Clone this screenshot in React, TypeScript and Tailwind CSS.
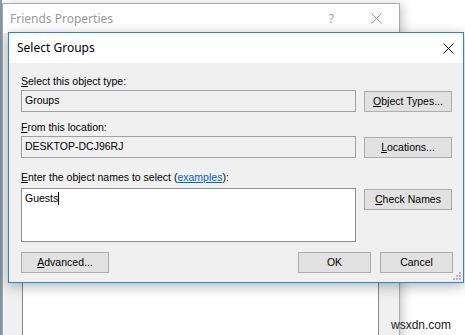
const ui = { fontFamily: '"Liberation Sans", Arial, sans-serif' };
const title = { fontFamily: '"Noto Sans", "Open Sans", sans-serif' };

const CloseIcon = ({ color }: { color: string }) => (
  <svg width="11" height="11" viewBox="0 0 11 11">
    <path d="M0.5 0.5L10.5 10.5M10.5 0.5L0.5 10.5" stroke={color} strokeWidth="1" fill="none" />
  </svg>
);

const Btn = ({ w, children }: { w: string; children: React.ReactNode }) => (
  <div
    className={`${w} h-[21px] flex items-center justify-center bg-[#e1e1e1] border border-[#adadad] text-[10.5px] text-black`}
  >
    {children}
  </div>
);

const U = ({ children }: { children: React.ReactNode }) => <span className="underline underline-offset-[1px]">{children}</span>;

export default function App() {
  return (
    <div className="relative w-[465px] h-[335px] overflow-hidden bg-white" style={ui}>
      {/* edge of a window further back */}
      <div className="absolute left-0 top-0 w-[2px] h-full bg-[#8c9cb0]" />

      {/* Friends Properties (inactive, behind) */}
      <div className="absolute left-[2px] top-[3px] w-[398px] h-[345px] flex flex-col border border-[#aaaaaa] bg-[#f0f0f0] shadow-[2px_2px_10px_rgba(0,0,0,0.25)]">
        <div className="h-[29px] shrink-0 flex items-center bg-white pl-[7px] pr-[17px]" style={title}>
          <span className="text-[12px] text-[#999999] flex-1">Friends Properties</span>
          <span className="text-[12px] text-[#999999] mr-[37px]">?</span>
          <CloseIcon color="#9a9a9a" />
        </div>
        <div className="flex-1 pl-[19px] pt-[180px]">
          <div className="w-[357px] h-full bg-white border border-[#828790]" />
        </div>
      </div>

      {/* Select Groups (active) */}
      <div className="absolute left-[8px] top-[32px] w-[456px] h-[251px] flex flex-col border border-[#2b83d6] bg-[#f0f0f0] shadow-[0_3px_12px_rgba(0,0,0,0.3)]">
        <div className="h-[30px] shrink-0 flex items-center justify-between bg-white pl-[8px] pr-[9px]" style={title}>
          <span className="text-[12px] text-black">Select Groups</span>
          <CloseIcon color="#000000" />
        </div>

        <div className="relative flex-1 flex flex-col pl-[12px] pr-[10px] pt-[11px]">
          <div className="h-[14px] leading-[14px] text-[10.5px] text-black">
            <U>S</U>elect this object type:
          </div>
          <div className="mt-[2px] flex items-start gap-[8px]">
            <div className="w-[335px] h-[22px] flex items-center px-[3px] bg-[#f0f0f0] border border-[#a0a0a0] text-[10.5px] text-black">
              Groups
            </div>
            <div className="mt-[1px]">
              <Btn w="w-[88px]">
                <U>O</U>bject Types...
              </Btn>
            </div>
          </div>

          <div className="mt-[8px] h-[14px] leading-[14px] text-[10.5px] text-black">
            <U>F</U>rom this location:
          </div>
          <div className="mt-[2px] flex items-start gap-[8px]">
            <div className="w-[335px] h-[22px] flex items-center px-[3px] bg-[#f0f0f0] border border-[#a0a0a0] text-[10.5px] text-black">
              DESKTOP-DCJ96RJ
            </div>
            <div className="mt-[1px]">
              <Btn w="w-[88px]">
                <U>L</U>ocations...
              </Btn>
            </div>
          </div>

          <div className="mt-[12px] h-[14px] leading-[14px] text-[10.5px] text-black">
            <U>E</U>nter the object names to select (
            <span className="text-[#0066cc] underline underline-offset-[1px]">examples</span>):
          </div>
          <div className="mt-[4px] flex items-start gap-[8px]">
            <div className="w-[335px] h-[54px] px-[3px] pt-[2px] bg-white border border-[#8f8f8f] text-[10.5px] text-black leading-[14px]">
              <span>Guests</span>
              <span className="inline-block w-px h-[13px] bg-black align-[-3px]" />
            </div>
            <div className="mt-[1px]">
              <Btn w="w-[88px]">
                <U>C</U>heck Names
              </Btn>
            </div>
          </div>

          <div className="mt-[10px] flex items-center justify-between">
            <Btn w="w-[88px]">
              <U>A</U>dvanced...
            </Btn>
            <div className="flex gap-[9px]">
              <Btn w="w-[73px]">OK</Btn>
              <Btn w="w-[73px]">Cancel</Btn>
            </div>
          </div>

          {/* size grip */}
          <svg className="absolute right-[1px] bottom-[1px]" width="9" height="9" viewBox="0 0 9 9">
            <g fill="#b8b8b8">
              <rect x="6" y="0" width="2" height="2" />
              <rect x="3" y="3" width="2" height="2" />
              <rect x="6" y="3" width="2" height="2" />
              <rect x="0" y="6" width="2" height="2" />
              <rect x="3" y="6" width="2" height="2" />
              <rect x="6" y="6" width="2" height="2" />
            </g>
          </svg>
        </div>
      </div>

      {/* watermark */}
      <div className="absolute left-[391px] top-[317px] text-[12px] leading-[16px] text-[#222222]" style={ui}>
        wsxdn.com
      </div>
    </div>
  );
}
